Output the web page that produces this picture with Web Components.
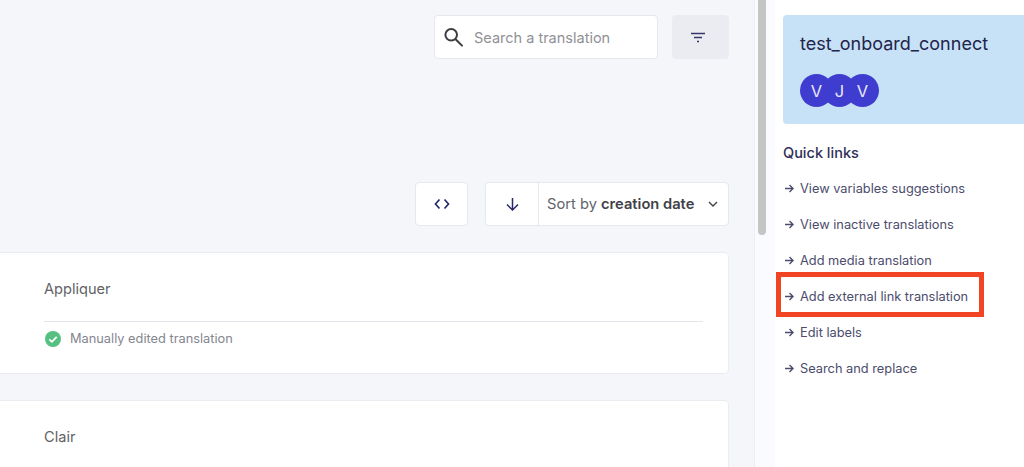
<!DOCTYPE html>
<html lang="en">
<head>
<meta charset="utf-8">
<title>Translations</title>
<style>
  html, body { margin: 0; height: 100%; overflow: hidden; }
  body { display: flex; font-family: Inter, "Liberation Sans", sans-serif; background: #fff; }
</style>
</head>
<body>
  <translations-main>
    <search-box slot="search" placeholder="Search a translation"></search-box>
    <tool-button slot="search" variant="filled" size="57">
      <svg width="14" height="11" viewBox="0 0 14 11" fill="none" stroke="#34366b" stroke-width="1.700"><path d="M0 1.500h14M3 5.500h8M6 9.500h2"/></svg>
    </tool-button>
    <tool-button slot="sort" size="53">
      <svg width="16" height="12" viewBox="0 0 16 12" fill="none" stroke="#27296a" stroke-width="1.700"><path d="M5.500 1.500 1.500 6l4 4.500M10.500 1.500l4 4.500-4 4.500"/></svg>
    </tool-button>
    <sort-control slot="sort"></sort-control>
    <translation-card title-text="Appliquer" status="Manually edited translation"></translation-card>
    <translation-card title-text="Clair"></translation-card>
  </translations-main>
  <scroll-rail></scroll-rail>
  <project-sidebar>
    <project-card name="test_onboard_connect" members="V,J,V"></project-card>
    <quick-link>View variables suggestions</quick-link>
    <quick-link>View inactive translations</quick-link>
    <quick-link>Add media translation</quick-link>
    <quick-link highlighted>Add external link translation</quick-link>
    <quick-link>Edit labels</quick-link>
    <quick-link>Search and replace</quick-link>
  </project-sidebar>

<script>
const mainTemplate = document.createElement("template");
mainTemplate.innerHTML = `
  <style>
    :host {
      display: block;
      width: 754px;
      height: 467px;
      flex: none;
      box-sizing: border-box;
      padding: 15px 25px 0 0;
      background: #f5f6fa;
      overflow: hidden;
    }
    .row { display: flex; justify-content: flex-end; }
    .search { gap: 14px; }
    .sort { gap: 17px; margin-top: 123px; }
    .cards { display: flex; flex-direction: column; gap: 26px; margin-top: 26px; }
  </style>
  <div class="row search"><slot name="search"></slot></div>
  <div class="row sort"><slot name="sort"></slot></div>
  <div class="cards"><slot></slot></div>
`;

class TranslationsMain extends HTMLElement {
  constructor() {
    super();
    this.attachShadow({ mode: "open" }).appendChild(mainTemplate.content.cloneNode(true));
  }
}
customElements.define("translations-main", TranslationsMain);

const searchTemplate = document.createElement("template");
searchTemplate.innerHTML = `
  <style>
    :host {
      display: flex;
      align-items: center;
      gap: 10px;
      width: 224px;
      height: 44px;
      box-sizing: border-box;
      padding: 0 0 0 9px;
      background: #fff;
      border: 1px solid #e6e8ef;
      border-radius: 4px;
      font-size: 14.500px;
      color: #8f9196;
    }
    svg { flex: none; }
  </style>
  <svg width="20" height="20" viewBox="0 0 20 20" fill="none" stroke="#3b3d40" stroke-width="2"><circle cx="7.200" cy="7.800" r="5.800"/><path d="m11.600 12.200 6.400 6.400" stroke-linecap="round"/></svg>
  <span id="text"></span>
`;

class SearchBox extends HTMLElement {
  constructor() {
    super();
    this.attachShadow({ mode: "open" }).appendChild(searchTemplate.content.cloneNode(true));
  }
  connectedCallback() {
    this.shadowRoot.querySelector("#text").textContent = this.getAttribute("placeholder");
  }
}
customElements.define("search-box", SearchBox);

const toolTemplate = document.createElement("template");
toolTemplate.innerHTML = `
  <style>
    :host {
      display: flex;
      align-items: center;
      justify-content: center;
      height: 44px;
      box-sizing: border-box;
      background: #fff;
      border: 1px solid #e6e8ef;
      border-radius: 4px;
    }
    :host([variant="filled"]) { background: #ebecf1; border-color: #ebecf1; padding-right: 5px; }
    ::slotted(svg) { display: block; }
  </style>
  <slot></slot>
`;

class ToolButton extends HTMLElement {
  constructor() {
    super();
    this.attachShadow({ mode: "open" }).appendChild(toolTemplate.content.cloneNode(true));
  }
  connectedCallback() {
    this.style.width = `${this.getAttribute("size")}px`;
  }
}
customElements.define("tool-button", ToolButton);

const sortTemplate = document.createElement("template");
sortTemplate.innerHTML = `
  <style>
    :host {
      display: flex;
      width: 244px;
      height: 44px;
      box-sizing: border-box;
      background: #fff;
      border: 1px solid #e6e8ef;
      border-radius: 4px;
      font-size: 14.700px;
      color: #63656b;
    }
    .dir {
      display: flex;
      align-items: center;
      justify-content: center;
      width: 52px;
      border-right: 1px solid #e6e8ef;
    }
    .label {
      flex: 1;
      display: flex;
      align-items: center;
      justify-content: space-between;
      padding: 0 10px 0 8px;
      white-space: nowrap;
    }
    b { font-weight: 600; color: #3f4146; }
  </style>
  <div class="dir">
    <svg width="13" height="13" viewBox="0 0 13 13" fill="none" stroke="#27296a" stroke-width="1.500"><path d="M6.500 0v12M1 6.500l5.500 5.500L12 6.500"/></svg>
  </div>
  <div class="label">
    <span>Sort by <b>creation date</b></span>
    <svg width="10" height="7" viewBox="0 0 10 7" fill="none" stroke="#3f4146" stroke-width="1.400"><path d="m1 1 4 4 4-4"/></svg>
  </div>
`;

class SortControl extends HTMLElement {
  constructor() {
    super();
    this.attachShadow({ mode: "open" }).appendChild(sortTemplate.content.cloneNode(true));
  }
}
customElements.define("sort-control", SortControl);

const cardTemplate = document.createElement("template");
cardTemplate.innerHTML = `
  <style>
    :host {
      display: block;
      flex: none;
      height: 122px;
      box-sizing: border-box;
      padding: 26px 25px 0 44px;
      background: #fff;
      border: 1px solid #eaecf2;
      border-left: none;
      border-radius: 0 5px 5px 0;
    }
    .title { font-size: 14.600px; line-height: 20px; color: #5f6166; }
    .status {
      display: flex;
      align-items: center;
      gap: 9px;
      margin-top: 22px;
      padding-top: 7px;
      border-top: 1px solid #e3e5eb;
      font-size: 12.800px;
      line-height: 20px;
      color: #84868f;
    }
    svg { margin-left: 1px; }
  </style>
  <div class="title"></div>
`;

class TranslationCard extends HTMLElement {
  constructor() {
    super();
    this.attachShadow({ mode: "open" }).appendChild(cardTemplate.content.cloneNode(true));
  }
  connectedCallback() {
    this.shadowRoot.querySelector(".title").textContent = this.getAttribute("title-text");
    const status = this.getAttribute("status");
    if (status) {
      const row = document.createElement("div");
      row.className = "status";
      row.innerHTML = `<svg width="16" height="16" viewBox="0 0 16 16"><circle cx="8" cy="8" r="8" fill="#56c082"/><path d="m4.300 8.300 2.600 2.500 4.800-5" fill="none" stroke="#fff" stroke-width="1.800"/></svg><span>${status}</span>`;
      this.shadowRoot.appendChild(row);
    }
  }
}
customElements.define("translation-card", TranslationCard);

const railTemplate = document.createElement("template");
railTemplate.innerHTML = `
  <style>
    :host {
      display: block;
      flex: none;
      width: 21px;
      height: 467px;
      box-sizing: border-box;
      padding-left: 3px;
      background: #fafbfe;
      border-left: 1px solid #eceef4;
    }
    .thumb { width: 8px; height: 235px; background: #c4c6c6; border-radius: 0 0 4px 4px; }
  </style>
  <div class="thumb"></div>
`;

class ScrollRail extends HTMLElement {
  constructor() {
    super();
    this.attachShadow({ mode: "open" }).appendChild(railTemplate.content.cloneNode(true));
  }
}
customElements.define("scroll-rail", ScrollRail);

const sidebarTemplate = document.createElement("template");
sidebarTemplate.innerHTML = `
  <style>
    :host {
      display: block;
      flex: 1;
      box-sizing: border-box;
      padding: 15px 0 0 8px;
      background: #fff;
      overflow: hidden;
    }
    h2 {
      margin: 19px 0 7px;
      font-size: 14.500px;
      font-weight: 500;
      line-height: 20px;
      color: #2f3057;
    }
  </style>
  <slot name="project"></slot>
  <h2>Quick links</h2>
  <slot></slot>
`;

class ProjectSidebar extends HTMLElement {
  constructor() {
    super();
    this.attachShadow({ mode: "open" }).appendChild(sidebarTemplate.content.cloneNode(true));
    this.querySelector("project-card").slot = "project";
  }
}
customElements.define("project-sidebar", ProjectSidebar);

const projectTemplate = document.createElement("template");
projectTemplate.innerHTML = `
  <style>
    :host {
      display: block;
      height: 109px;
      box-sizing: border-box;
      padding: 18px 0 0 17px;
      background: #c7e1f7;
      border-radius: 4px 0 0 4px;
    }
    .name { font-size: 18px; line-height: 22px; color: #23244a; }
    .stack { display: flex; margin-top: 19px; }
    .avatar {
      display: flex;
      align-items: center;
      justify-content: center;
      width: 33px;
      height: 33px;
      margin-right: -10px;
      border-radius: 50%;
      background: #3f3dcf;
      color: #e8e8fb;
      font-size: 16.500px;
    }
  </style>
  <div class="name"></div>
  <div class="stack"></div>
`;

class ProjectCard extends HTMLElement {
  constructor() {
    super();
    this.attachShadow({ mode: "open" }).appendChild(projectTemplate.content.cloneNode(true));
  }
  connectedCallback() {
    this.shadowRoot.querySelector(".name").textContent = this.getAttribute("name");
    const stack = this.shadowRoot.querySelector(".stack");
    this.getAttribute("members").split(",").forEach((letter) => {
      const avatar = document.createElement("div");
      avatar.className = "avatar";
      avatar.textContent = letter;
      stack.appendChild(avatar);
    });
  }
}
customElements.define("project-card", ProjectCard);

const linkTemplate = document.createElement("template");
linkTemplate.innerHTML = `
  <style>
    :host {
      display: flex;
      align-items: center;
      gap: 6px;
      position: relative;
      height: 36px;
      padding-left: 2px;
      font-size: 12.800px;
      color: #4b4c6d;
      white-space: nowrap;
    }
    :host([highlighted])::after {
      content: "";
      position: absolute;
      left: -7px;
      top: -6px;
      width: 198px;
      height: 35px;
      border: 5px solid #f04425;
    }
    svg { flex: none; }
  </style>
  <svg width="9" height="9" viewBox="0 0 9 9" fill="none" stroke="#4b4c6d" stroke-width="1.400"><path d="M0 4.500h8M4.500 1l3.500 3.500L4.500 8"/></svg>
  <slot></slot>
`;

class QuickLink extends HTMLElement {
  constructor() {
    super();
    this.attachShadow({ mode: "open" }).appendChild(linkTemplate.content.cloneNode(true));
  }
}
customElements.define("quick-link", QuickLink);
</script>
</body>
</html>
